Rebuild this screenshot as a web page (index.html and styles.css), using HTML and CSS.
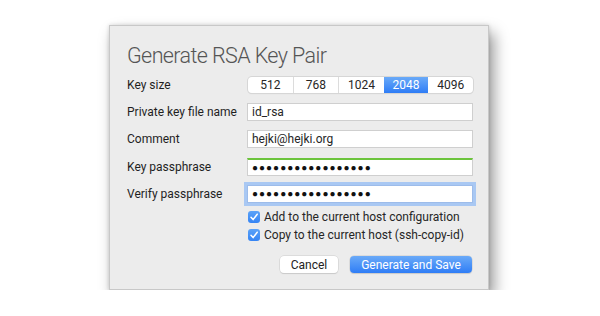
FILE: index.html
```html
<!DOCTYPE html>
<html lang="en">

<head>
    <meta charset="UTF-8">
    <title>Generate RSA Key Pair</title>
    <link rel="stylesheet" href="styles.css">
</head>

<body>
    <!-- Dialog -->
    <div class="dialog">
        <h1 class="dialog-title">Generate RSA Key Pair</h1>

        <div class="form">
            <div class="label">Key size</div>
            <div class="segments">
                <div class="segment">512</div>
                <div class="segment">768</div>
                <div class="segment">1024</div>
                <div class="segment selected">2048</div>
                <div class="segment">4096</div>
            </div>

            <div class="label">Private key file name</div>
            <div class="field">id_rsa</div>

            <div class="label">Comment</div>
            <div class="field">hejki@hejki.org</div>

            <div class="label">Key passphrase</div>
            <div class="field secret strong">&#9679;&#9679;&#9679;&#9679;&#9679;&#9679;&#9679;&#9679;&#9679;&#9679;&#9679;&#9679;&#9679;&#9679;&#9679;&#9679;&#9679;</div>

            <div class="label">Verify passphrase</div>
            <div class="field secret focused">&#9679;&#9679;&#9679;&#9679;&#9679;&#9679;&#9679;&#9679;&#9679;&#9679;&#9679;&#9679;&#9679;&#9679;&#9679;&#9679;&#9679;</div>
        </div>

        <!-- Options -->
        <div class="options">
            <label class="option"><span class="checkbox"><svg viewBox="0 0 12 12" width="12" height="12"><path d="M3 6.3 L5.1 8.6 L9.2 3.2" fill="none" stroke="#fff" stroke-width="1.5" stroke-linecap="round" stroke-linejoin="round"/></svg></span>Add to the current host configuration</label>
            <label class="option"><span class="checkbox"><svg viewBox="0 0 12 12" width="12" height="12"><path d="M3 6.3 L5.1 8.6 L9.2 3.2" fill="none" stroke="#fff" stroke-width="1.5" stroke-linecap="round" stroke-linejoin="round"/></svg></span>Copy to the current host (ssh-copy-id)</label>
        </div>

        <!-- Buttons -->
        <div class="buttons">
            <button class="btn">Cancel</button>
            <button class="btn primary">Generate and Save</button>
        </div>
    </div>
</body>

</html>
```

FILE: styles.css
```css
/* General Styles */
* {
    margin: 0;
    padding: 0;
    box-sizing: border-box;
}

body {
    font-family: Roboto, "Liberation Sans", sans-serif;
    background-color: #ffffff;
    padding: 25px 0 0 109px;
}

/* Dialog Window */
.dialog {
    width: 380px;
    height: 265px;
    background-color: #ececec;
    border: 1px solid #c8c8c8;
    box-shadow: 5px 8px 14px rgba(0, 0, 0, 0.4), 0 0 4px rgba(0, 0, 0, 0.15);
    padding: 0 16px 0 17px;
    color: #262626;
    white-space: nowrap;
}

.dialog-title {
    font-family: Roboto, sans-serif;
    font-weight: 300;
    font-size: 21.5px;
    letter-spacing: -0.6px;
    color: #555;
    line-height: 28px;
    margin-top: 16px;
    margin-bottom: 7px;
}

/* Form Grid */
.form {
    display: grid;
    grid-template-columns: 120px 226px;
    grid-template-rows: 16px 18px 18px 18px 18px;
    row-gap: 9.5px;
    align-items: center;
}

.label {
    font-size: 12px;
    color: #1f1f1f;
}

/* Segmented Control */
.segments {
    display: flex;
    height: 16px;
    margin-left: 1px;
    background: #fff;
    border-radius: 4px;
    box-shadow: 0 0 0 1px #d6d6d6, 0 1px 1px rgba(0, 0, 0, 0.12);
    overflow: hidden;
}

.segment {
    flex: 1;
    font-size: 12px;
    line-height: 16px;
    text-align: center;
    border-left: 1px solid #dcdcdc;
}

.segment:first-child {
    border-left: none;
}

.segment.selected {
    background: linear-gradient(#6aaaf8, #2f7df6);
    color: #fff;
    border-left: none;
}

.segment.selected + .segment {
    border-left: none;
}

/* Text Fields */
.field {
    height: 18px;
    background: #fff;
    border: 1px solid #cfcfcf;
    font-size: 12px;
    line-height: 16px;
    padding-left: 4px;
}

.field.secret {
    font-size: 10px;
    letter-spacing: 1px;
    color: #111;
}

.field.strong {
    border-top: 2px solid #6cc43c;
}

.field.focused {
    border-color: #9dbcea;
    box-shadow: 0 0 0 3px #a9c8f3;
}

/* Checkbox Options */
.options {
    margin: 8px 0 0 121px;
    display: flex;
    flex-direction: column;
    gap: 6px;
}

.option {
    display: flex;
    align-items: center;
    gap: 4px;
    font-size: 12px;
    height: 12px;
}

.checkbox {
    width: 12px;
    height: 12px;
    border-radius: 3px;
    background: linear-gradient(#5ba2f8, #3584f4);
    display: flex;
}

/* Buttons */
.buttons {
    display: flex;
    justify-content: flex-end;
    gap: 12px;
    margin-top: 15px;
}

.btn {
    font-family: Roboto, "Liberation Sans", sans-serif;
    font-size: 12px;
    height: 17px;
    border: none;
    border-radius: 4px;
    background: #fff;
    color: #222;
    box-shadow: 0 0 0 0.5px #ccc, 0 1px 1px rgba(0, 0, 0, 0.15);
    width: 58px;
}

.btn.primary {
    width: 122px;
    background: linear-gradient(#6aaaf8, #2f7df6);
    color: #fff;
}
```
